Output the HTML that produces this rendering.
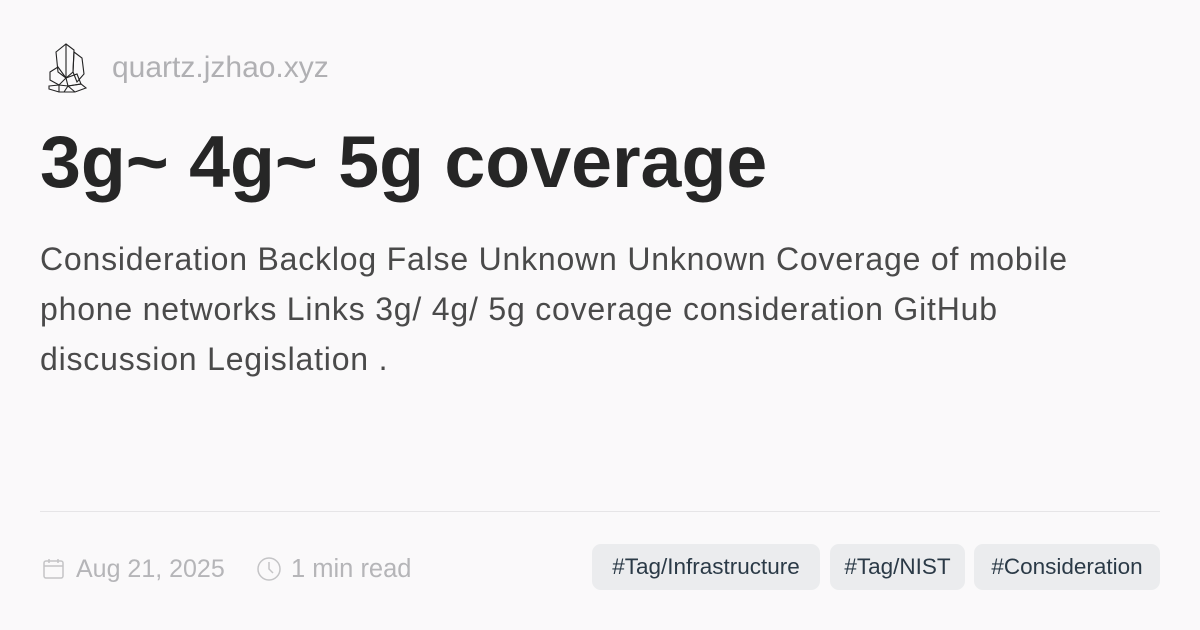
<!DOCTYPE html>
<html><head><style>
body{margin:0;width:1200px;height:630px;background:#faf9fa;font-family:"Liberation Sans",sans-serif;position:relative;overflow:hidden}
.a{position:absolute;white-space:nowrap}
.tag{position:absolute;top:544px;height:46px;line-height:46px;background:#ebecee;border-radius:9px;color:#2b3a47;font-size:22.5px;text-align:center}
</style></head><body>
<svg class="a" style="left:46px;top:42px" width="42" height="52" viewBox="0 0 42 52" fill="none" stroke="#222" stroke-width="1.1">
<path d="M10 10 L20 2 L28 8 L27 30 L20 36 L12 30 Z M20 2 L20 36 M10 10 L12 30"/>
<path d="M28 10 L36 16 L38 32 L31 40 L27 30 Z"/>
<path d="M4 30 L12 25 L20 36 L13 43 L4 38 Z"/>
<path d="M20 36 L31 32 L35 42 L22 44 Z"/>
<path d="M3 44 L13 43 L22 44 L35 42 L40 46 L29 50 L13 50 L3 47 Z M13 43 L13 50 M22 44 L29 50 M22 44 L18 50"/>
</svg>
<div class="a" style="left:112px;top:51px;font-size:30px;color:#b0b0b3">quartz.jzhao.xyz</div>
<div class="a" style="left:40px;top:119px;font-size:73.5px;font-weight:bold;color:#262626">3g~ 4g~ 5g coverage</div>
<div class="a" style="left:40px;top:234px;font-size:32px;line-height:50px;letter-spacing:0.8px;color:#4a4a4a">Consideration Backlog False Unknown Unknown Coverage of mobile<br>phone networks Links 3g/ 4g/ 5g coverage consideration GitHub<br>discussion Legislation .</div>
<div class="a" style="left:40px;top:511px;width:1120px;height:1px;background:#e6e5e7"></div>
<svg class="a" style="left:42px;top:557px" width="24" height="24" viewBox="0 0 24 24" fill="none" stroke="#c4c4c6" stroke-width="1.5"><rect x="2" y="4" width="19" height="17" rx="2"/><path d="M2 9h19M7 2v4M16 2v4"/></svg>
<div class="a" style="left:76px;top:555px;font-size:25px;color:#b5b5b8">Aug 21, 2025</div>
<svg class="a" style="left:256px;top:556px" width="26" height="26" viewBox="0 0 26 26" fill="none" stroke="#c4c4c6" stroke-width="1.5"><circle cx="13" cy="13" r="11"/><path d="M13 6v7l4 4"/></svg>
<div class="a" style="left:291px;top:555px;font-size:25.5px;color:#b5b5b8">1 min read</div>
<div class="tag" style="left:592px;width:228px">#Tag/Infrastructure</div>
<div class="tag" style="left:830px;width:135px">#Tag/NIST</div>
<div class="tag" style="left:974px;width:186px">#Consideration</div>
</body></html>
